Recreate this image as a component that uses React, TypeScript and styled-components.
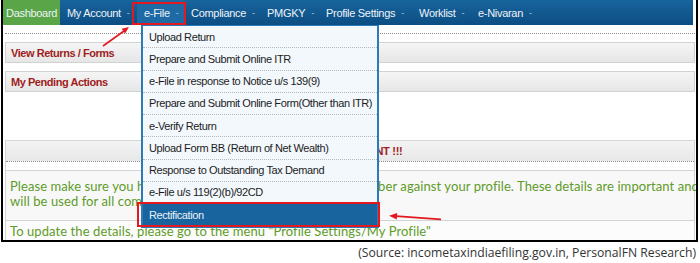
import React from 'react';
import styled, { createGlobalStyle } from 'styled-components';

const GlobalStyle = createGlobalStyle`
  html, body {
    margin: 0;
    padding: 0;
    background: #fff;
  }
  body {
    width: 700px;
    height: 263px;
    overflow: hidden;
    font-family: "Liberation Sans", Arial, sans-serif;
  }
`;

const navItems = [
  { label: 'My Account', w: 77 },
  { label: 'e-File', w: 47, active: true },
  { label: 'Compliance', w: 76 },
  { label: 'PMGKY', w: 59 },
  { label: 'Profile Settings', w: 93 },
  { label: 'Worklist', w: 59 },
  { label: 'e-Nivaran', w: 0 },
];

const menuItems = [
  'Upload Return',
  'Prepare and Submit Online ITR',
  'e-File in response to Notice u/s 139(9)',
  'Prepare and Submit Online Form(Other than ITR)',
  'e-Verify Return',
  'Upload Form BB (Return of Net Wealth)',
  'Response to Outstanding Tax Demand',
  'e-File u/s 119(2)(b)/92CD',
  'Rectification',
];

function App() {
  return (
    <Page>
      <GlobalStyle />
      <Frame>
        <NavBar>
          <NavItem $w={57} $green>
            Dashboard
          </NavItem>
          {navItems.map((item) => (
            <NavItem key={item.label} $w={item.w} $active={item.active}>
              {item.label}
              <Caret>-</Caret>
            </NavItem>
          ))}
        </NavBar>

        <Content>
          <DottedRule />
          <SectionBar>View Returns / Forms</SectionBar>
          <SectionBar>My Pending Actions</SectionBar>

          <NoticePanel>
            <NoticeHeader>IMPORTANT !!!</NoticeHeader>
            <DottedRule />
            <NoticeRow $first>
              <GreenText>
                Please make sure you have updated your Email and Mobile Number against your profile. These details are important and
                <br />
                will be used for all communication from the Department.
              </GreenText>
            </NoticeRow>
            <NoticeRow>
              <GreenText>To update the details, please go to the menu "Profile Settings/My Profile"</GreenText>
            </NoticeRow>
          </NoticePanel>
        </Content>
      </Frame>

      <Caption>(Source: incometaxindiaefiling.gov.in, PersonalFN Research)</Caption>

      <Dropdown>
        {menuItems.map((label, i) => (
          <MenuItem key={label} $active={i === menuItems.length - 1}>
            {label}
          </MenuItem>
        ))}
      </Dropdown>

      <Highlight style={{ left: 132, top: 2, width: 54, height: 23 }} />
      <Highlight style={{ left: 137, top: 202, width: 243, height: 25 }} />

      <Arrows width="700" height="263" viewBox="0 0 700 263">
        <line x1="103" y1="46" x2="124" y2="31" stroke="#e3191f" strokeWidth="1.6" />
        <polygon points="129,27 125.1,33.6 121.6,28.7" fill="#e3191f" />
        <line x1="396" y1="216.2" x2="441" y2="219.3" stroke="#e3191f" strokeWidth="1.8" />
        <polygon points="389,215.7 397.2,213 396.8,219.4" fill="#e3191f" />
      </Arrows>
    </Page>
  );
}

const Page = styled.div`
  position: relative;
  width: 700px;
  height: 263px;
`;

const Frame = styled.div`
  width: 693px;
  height: 240px;
  margin-left: 1px;
  border-left: 2px solid #000;
  border-right: 2px solid #000;
  border-bottom: 2px solid #000;
  overflow: hidden;
  background: #fff;
`;

const NavBar = styled.nav`
  display: flex;
  height: 25px;
  margin-right: 3px;
  background: linear-gradient(#18649c, #0c4e84);
`;

const NavItem = styled.div<{ $w: number; $green?: boolean; $active?: boolean }>`
  display: flex;
  align-items: center;
  flex: ${(p) => (p.$w ? 'none' : '1')};
  width: ${(p) => (p.$w ? `${p.$w}px` : 'auto')};
  box-sizing: border-box;
  padding-left: ${(p) => (p.$green ? '3px' : '7px')};
  white-space: nowrap;
  color: #eef3f8;
  font-size: 11px;
  letter-spacing: -0.3px;
  background: ${(p) => (p.$green ? '#59a548' : p.$active ? '#1d6aa4' : 'transparent')};
`;

const Caret = styled.span`
  margin-left: 6px;
  font-size: 9px;
  color: #aec6dc;
`;

const Content = styled.div`
  padding: 8px 1px 0 2px;
`;

const DottedRule = styled.div`
  border-top: 1px dotted #8a8a8a;
`;

const SectionBar = styled.div`
  display: flex;
  align-items: center;
  height: 21px;
  margin-top: 8px;
  box-sizing: border-box;
  padding-left: 5px;
  border: 1px solid #d2d2d2;
  background: linear-gradient(#f5f5f5, #e6e6e6);
  color: #9f1d1d;
  font-size: 11px;
  font-weight: 700;
  letter-spacing: -0.45px;
`;

const NoticePanel = styled.div`
  margin-top: 48px;
  border: 1px solid #d5d5d5;
  border-bottom: none;
  background: #fff;
`;

const NoticeHeader = styled.div`
  display: flex;
  align-items: center;
  justify-content: center;
  height: 20px;
  padding-left: 30px;
  background: linear-gradient(#f3f3f3, #e8e8e8);
  color: #9f1d1d;
  font-size: 11px;
  font-weight: 700;
  letter-spacing: -0.3px;
`;

const NoticeRow = styled.div<{ $first?: boolean }>`
  margin-top: ${(p) => (p.$first ? '8px' : '0')};
  padding: ${(p) => (p.$first ? '8px 4px 11px' : '3px 4px 6px')};
  border-top: 1px solid #d4d4d4;
  background: ${(p) => (p.$first ? '#f8f8f8' : '#fcfcfc')};
`;

const GreenText = styled.div`
  white-space: nowrap;
  color: #5e9b28;
  font-family: Lato, "Open Sans", sans-serif;
  font-size: 13px;
  line-height: 15px;
  letter-spacing: 0.08px;
`;

const Caption = styled.div`
  height: 21px;
  padding-right: 4px;
  text-align: right;
  color: #333;
  font-family: "Open Sans", sans-serif;
  font-size: 12.2px;
  line-height: 21px;
  white-space: nowrap;
`;

const Dropdown = styled.div`
  position: absolute;
  left: 141px;
  top: 25px;
  width: 238px;
  box-sizing: border-box;
  border: 2px solid #2c7ab6;
  border-top-width: 1px;
  background: #f3f8fc;
`;

const MenuItem = styled.div<{ $active?: boolean }>`
  display: flex;
  align-items: center;
  height: 22.25px;
  box-sizing: border-box;
  padding-left: 6px;
  border-bottom: ${(p) => (p.$active ? 'none' : '1px dotted #b8b8b8')};
  background: ${(p) => (p.$active ? '#17649f' : 'transparent')};
  color: ${(p) => (p.$active ? '#e9f1f8' : '#1c1c1c')};
  font-size: 11px;
  letter-spacing: -0.4px;
  white-space: nowrap;
`;

const Highlight = styled.div`
  position: absolute;
  box-sizing: border-box;
  border: 2px solid #e3191f;
`;

const Arrows = styled.svg`
  position: absolute;
  left: 0;
  top: 0;
  pointer-events: none;
`;

export default App;
